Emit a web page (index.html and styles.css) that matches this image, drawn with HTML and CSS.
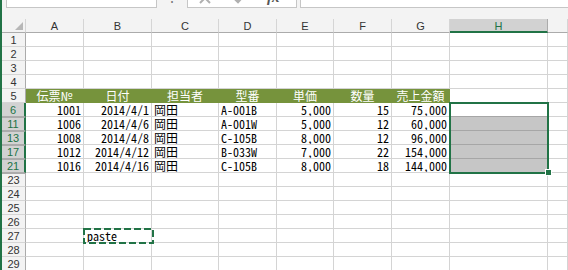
FILE: index.html
```html
<!DOCTYPE html>
<html lang="ja">
<head>
<meta charset="utf-8">
<link rel="stylesheet" href="styles.css">
</head>
<body>
<div class="app">
  <div class="fbar">
    <div class="namebox">H6</div>
    <div class="dots">⋮</div>
    <div class="fxbox">
      <svg class="ico" width="16" height="16" viewBox="0 0 16 16"><path d="M3 3 L13 13 M13 3 L3 13" stroke="#b0b0b0" stroke-width="2" fill="none"/></svg>
      <svg class="ico" width="16" height="16" viewBox="0 0 16 16"><path d="M2 8 L6 12 L14 3" stroke="#b0b0b0" stroke-width="2.5" fill="none"/></svg>
      <span class="fx">fx</span>
    </div>
    <div class="finput"></div>
  </div>
  <div class="sheet">
    <div class="row hdr">
      <div class="corner"><span class="tri"></span></div>
      <div class="ch wa">A</div><div class="ch wb">B</div><div class="ch wc">C</div><div class="ch wd">D</div><div class="ch we">E</div><div class="ch wf">F</div><div class="ch wg">G</div><div class="ch wh selh">H</div><div class="ch wi"></div>
    </div>
    <div class="row"><div class="rh">1</div><div class="c wa"></div><div class="c wb"></div><div class="c wc"></div><div class="c wd"></div><div class="c we"></div><div class="c wf"></div><div class="c wg"></div><div class="c wh"></div><div class="c wi"></div></div>
    <div class="row"><div class="rh">2</div><div class="c wa"></div><div class="c wb"></div><div class="c wc"></div><div class="c wd"></div><div class="c we"></div><div class="c wf"></div><div class="c wg"></div><div class="c wh"></div><div class="c wi"></div></div>
    <div class="row"><div class="rh">3</div><div class="c wa"></div><div class="c wb"></div><div class="c wc"></div><div class="c wd"></div><div class="c we"></div><div class="c wf"></div><div class="c wg"></div><div class="c wh"></div><div class="c wi"></div></div>
    <div class="row"><div class="rh">4</div><div class="c wa"></div><div class="c wb"></div><div class="c wc"></div><div class="c wd"></div><div class="c we"></div><div class="c wf"></div><div class="c wg"></div><div class="c wh"></div><div class="c wi"></div></div>
    <div class="row"><div class="rh">5</div><div class="c th wa">伝票№</div><div class="c th wb">日付</div><div class="c th wc">担当者</div><div class="c th wd">型番</div><div class="c th we">単価</div><div class="c th wf">数量</div><div class="c th wg">売上金額</div><div class="c wh"></div><div class="c wi"></div></div>
    <div class="row"><div class="rh sel">6</div><div class="c num wa">1001</div><div class="c num wb">2014/4/1</div><div class="c wc">岡田</div><div class="c wd">A-001B</div><div class="c num we">5,000</div><div class="c num wf">15</div><div class="c num wg">75,000</div><div class="c wh act"></div><div class="c wi"></div></div>
    <div class="row"><div class="rh sel hid">11</div><div class="c num wa">1006</div><div class="c num wb">2014/4/6</div><div class="c wc">岡田</div><div class="c wd">A-001W</div><div class="c num we">5,000</div><div class="c num wf">12</div><div class="c num wg">60,000</div><div class="c wh hl"></div><div class="c wi"></div></div>
    <div class="row"><div class="rh sel hid">13</div><div class="c num wa">1008</div><div class="c num wb">2014/4/8</div><div class="c wc">岡田</div><div class="c wd">C-105B</div><div class="c num we">8,000</div><div class="c num wf">12</div><div class="c num wg">96,000</div><div class="c wh hl"></div><div class="c wi"></div></div>
    <div class="row"><div class="rh sel hid">17</div><div class="c num wa">1012</div><div class="c num wb">2014/4/12</div><div class="c wc">岡田</div><div class="c wd">B-033W</div><div class="c num we">7,000</div><div class="c num wf">22</div><div class="c num wg">154,000</div><div class="c wh hl"></div><div class="c wi"></div></div>
    <div class="row"><div class="rh sel hid">21</div><div class="c num wa">1016</div><div class="c num wb">2014/4/16</div><div class="c wc">岡田</div><div class="c wd">C-105B</div><div class="c num we">8,000</div><div class="c num wf">18</div><div class="c num wg">144,000</div><div class="c wh hl"></div><div class="c wi"></div></div>
    <div class="row"><div class="rh hid">23</div><div class="c wa"></div><div class="c wb"></div><div class="c wc"></div><div class="c wd"></div><div class="c we"></div><div class="c wf"></div><div class="c wg"></div><div class="c wh"></div><div class="c wi"></div></div>
    <div class="row"><div class="rh">24</div><div class="c wa"></div><div class="c wb"></div><div class="c wc"></div><div class="c wd"></div><div class="c we"></div><div class="c wf"></div><div class="c wg"></div><div class="c wh"></div><div class="c wi"></div></div>
    <div class="row"><div class="rh">25</div><div class="c wa"></div><div class="c wb"></div><div class="c wc"></div><div class="c wd"></div><div class="c we"></div><div class="c wf"></div><div class="c wg"></div><div class="c wh"></div><div class="c wi"></div></div>
    <div class="row"><div class="rh">26</div><div class="c wa"></div><div class="c wb"></div><div class="c wc"></div><div class="c wd"></div><div class="c we"></div><div class="c wf"></div><div class="c wg"></div><div class="c wh"></div><div class="c wi"></div></div>
    <div class="row"><div class="rh">27</div><div class="c wa"></div><div class="c wb paste">paste</div><div class="c wc"></div><div class="c wd"></div><div class="c we"></div><div class="c wf"></div><div class="c wg"></div><div class="c wh"></div><div class="c wi"></div></div>
    <div class="row"><div class="rh">28</div><div class="c wa"></div><div class="c wb"></div><div class="c wc"></div><div class="c wd"></div><div class="c we"></div><div class="c wf"></div><div class="c wg"></div><div class="c wh"></div><div class="c wi"></div></div>
    <div class="row"><div class="rh">29</div><div class="c wa"></div><div class="c wb"></div><div class="c wc"></div><div class="c wd"></div><div class="c we"></div><div class="c wf"></div><div class="c wg"></div><div class="c wh"></div><div class="c wi"></div></div>

    <div class="selbox"></div>
    <div class="handle"></div>
    <svg class="ants" width="71" height="16" viewBox="0 0 71 16"><rect x="1" y="1" width="69" height="14" fill="none" stroke="#217346" stroke-width="2" stroke-dasharray="7 3"/></svg>
  </div>
</div>
</body>
</html>
```

FILE: styles.css
```css
* { box-sizing: border-box; }
html, body { margin: 0; padding: 0; }
body {
  width: 568px;
  height: 270px;
  overflow: hidden;
  background: #ffffff;
  font-family: "Noto Sans CJK JP", sans-serif;
}
.app {
  height: 270px;
  border-left: 2px solid #217346;
  display: flex;
  flex-direction: column;
  overflow: hidden;
}
.fbar {
  height: 19px;
  flex: none;
  background: #f3f3f3;
  display: flex;
  align-items: flex-start;
  overflow: hidden;
}
.namebox {
  margin-left: 4px;
  margin-top: -13px;
  width: 151px;
  height: 21px;
  border: 1px solid #c6c6c6;
  background: #fff;
  font-family: "Liberation Sans", sans-serif;
  font-size: 12px;
  line-height: 16px;
  padding-left: 4px;
  color: #222;
}
.dots {
  width: 30px;
  margin-top: -12px;
  text-align: center;
  font-size: 14px;
  line-height: 16px;
  color: #777;
}
.fxbox {
  margin-top: -13px;
  width: 110px;
  height: 21px;
  border: 1px solid #c6c6c6;
  background: #fff;
  display: flex;
  align-items: center;
  padding-left: 9px;
  gap: 19px;
}
.ico { display: block; flex: none; }
.fx {
  font-family: "Liberation Serif", serif;
  font-style: italic;
  font-weight: bold;
  font-size: 15px;
  color: #555;
}
.finput {
  margin-left: 3px;
  margin-top: -13px;
  flex: 1;
  height: 21px;
  border: 1px solid #c6c6c6;
  border-right: none;
  background: #fff;
}
.sheet {
  position: relative;
  flex: 1;
}
.row {
  display: flex;
  height: 14px;
}
.corner, .rh, .ch, .c {
  flex: none;
  height: 14px;
}
.corner {
  width: 24px;
  background: #f3f3f3;
  border-right: 1px solid #d5d5d5;
  border-bottom: 1px solid #ababab;
  position: relative;
}
.tri {
  position: absolute;
  right: 2px;
  bottom: 2px;
  width: 0;
  height: 0;
  border-left: 8px solid transparent;
  border-bottom: 8px solid #b7b7b7;
}
.ch {
  background: #f3f3f3;
  border-right: 1px solid #d5d5d5;
  border-bottom: 1px solid #ababab;
  text-align: center;
  font-family: "Liberation Sans", sans-serif;
  font-size: 11px;
  line-height: 14px;
  color: #333;
}
.ch.selh {
  background: #d2d2d2;
  color: #217346;
  border-bottom: 2px solid #217346;
  border-right-color: #ababab;
}
.rh {
  width: 24px;
  background: #f3f3f3;
  border-right: 1px solid #ababab;
  border-bottom: 1px solid #d5d5d5;
  text-align: center;
  font-family: "Liberation Sans", sans-serif;
  font-size: 11px;
  line-height: 14px;
  color: #333;
}
.rh.hid {
  border-top: 1px solid #ababab;
  line-height: 12px;
}
.rh.sel {
  background: #d2d2d2;
  color: #217346;
  border-right: 2px solid #217346;
  border-bottom-color: #ababab;
}
.wa { width: 58px; }
.wb { width: 68px; }
.wc { width: 67px; }
.wd { width: 58px; }
.we { width: 57px; }
.wf { width: 58px; }
.wg { width: 58px; }
.wh { width: 98px; }
.wi { flex: 1; }
.ch.wi { flex: 1; }
.c {
  border-right: 1px solid #d4d4d4;
  border-bottom: 1px solid #d4d4d4;
  font-size: 12px;
  line-height: 14px;
  padding: 0 2px;
  color: #000;
  white-space: nowrap;
  overflow: hidden;
  font-feature-settings: "hwid";
}
.c.num { text-align: right; }
.c.th {
  background: #76933c;
  border-color: #76933c;
  color: #fff;
  text-align: center;
}
.c.hl {
  background: #c6c6c6;
  border-bottom-color: #a6a6a6;
}
.c.act {
  border-bottom-color: #a6a6a6;
}
.c.paste { padding-left: 3px; }
.selbox {
  position: absolute;
  left: 447px;
  top: 83px;
  width: 100px;
  height: 72px;
  border: 2px solid #217346;
}
.handle {
  position: absolute;
  left: 543px;
  top: 150px;
  width: 7px;
  height: 7px;
  background: #217346;
  border: 1px solid #fff;
}
.ants {
  position: absolute;
  left: 81px;
  top: 209px;
  display: block;
}
```
